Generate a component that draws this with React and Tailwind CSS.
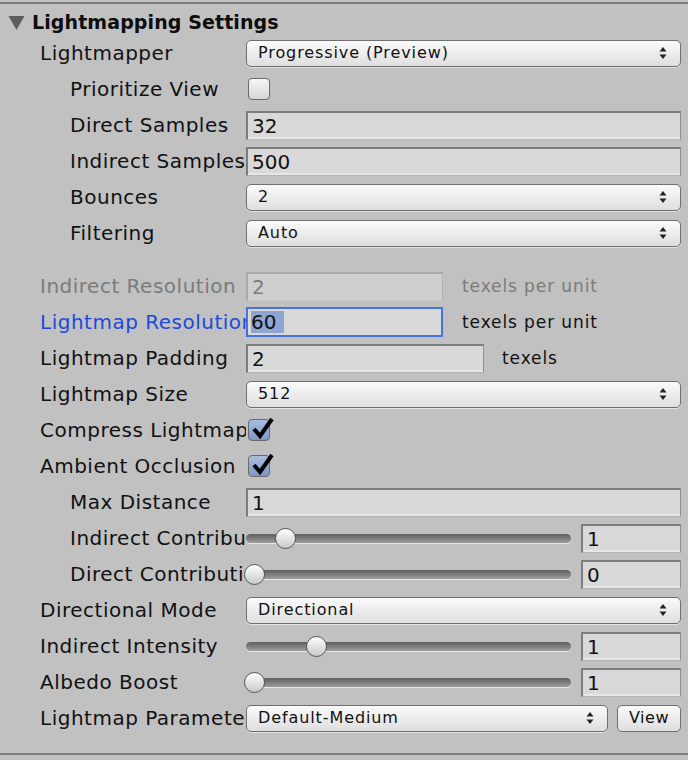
import React from "react";

const FONT = { fontFamily: '"DejaVu Sans", "Noto Sans", sans-serif' };

function Arrows() {
  return (
    <svg width="8" height="14" viewBox="0 0 8 14" className="shrink-0">
      <path d="M4 1 L7.5 5.5 L0.5 5.5 Z" fill="#222" />
      <path d="M4 13 L7.5 8.5 L0.5 8.5 Z" fill="#222" />
    </svg>
  );
}

function Dropdown({ value, className = "" }) {
  return (
    <div
      className={
        "flex h-[27px] items-center justify-between rounded-[5px] border border-[#6f6f6f] bg-gradient-to-b from-[#fbfbfb] to-[#dedede] pl-[11px] pr-[13px] text-[16px] tracking-[0.9px] text-[#111] shadow-[0_1px_0_#e4e4e4] " +
        className
      }
    >
      <span className="truncate">{value}</span>
      <Arrows />
    </div>
  );
}

function Field({ value, className = "", disabled = false, focused = false }) {
  if (focused) {
    return (
      <div
        className={
          "flex h-[30px] items-center border-2 border-[#4572dd] bg-[#d9d9d9] pl-[3px] text-[20px] text-[#111] " + className
        }
      >
        <span className="bg-[#8ea4d2] pr-[8px] leading-[22px]">{value}</span>
      </div>
    );
  }
  return (
    <div
      className={
        "flex h-[29px] items-center border-2 border-b border-r pl-[4px] text-[20px] " +
        (disabled
          ? "border-[#a9a9a9] border-b-[#c9c9c9] border-r-[#b3b3b3] bg-[#cfcfcf] text-[#7b7b7b] "
          : "border-[#7c7c7c] border-b-[#b4b4b4] border-r-[#8f8f8f] bg-[#d9d9d9] text-[#111] shadow-[inset_0_-2px_0_#e6e6e6] ") +
        className
      }
    >
      {value}
    </div>
  );
}

function Checkbox({ checked }) {
  return (
    <div
      className={
        "relative ml-[2px] h-[22px] w-[22px] rounded-[4px] border border-[#6a6a6a] " +
        (checked
          ? "bg-gradient-to-b from-[#a9bde0] to-[#7f98c6]"
          : "bg-gradient-to-b from-[#f6f6f6] to-[#d6d6d6]")
      }
    >
      {checked && (
        <svg width="26" height="24" viewBox="0 0 26 24" className="absolute left-[1px] top-[-4px]">
          <path d="M4 13 L10 20 L22 3" stroke="#000" strokeWidth="4" fill="none" strokeLinejoin="miter" strokeLinecap="butt" />
        </svg>
      )}
    </div>
  );
}

function Slider({ pos, value }) {
  return (
    <div className="flex flex-1 items-center">
      <div className="relative h-[28px] flex-1">
        <div className="absolute left-0 right-[10px] top-[10px] h-[9px] rounded-full bg-gradient-to-b from-[#5f5f5f] to-[#9d9d9d] shadow-[0_1px_0_#e8e8e8]" />
        <div
          className="absolute top-[4px] h-[21px] w-[21px] rounded-full border-[1.5px] border-[#555] bg-gradient-to-b from-[#ffffff] to-[#c9c9c9]"
          style={{ left: pos }}
        />
      </div>
      <Field value={value} className="w-[100px]" />
    </div>
  );
}

function Row({ label, indent = false, labelClass = "text-[#111]", children }) {
  return (
    <div className="flex h-[36px] items-center pr-[7px]">
      <div
        className={
          "shrink-0 overflow-hidden whitespace-nowrap text-[20px] tracking-[0.5px] " +
          (indent ? "w-[246px] pl-[70px] " : "w-[246px] pl-[40px] ") +
          labelClass
        }
      >
        {label}
      </div>
      <div className="flex min-w-0 flex-1 items-center">{children}</div>
    </div>
  );
}

export default function App() {
  return (
    <div className="h-[760px] w-[688px] bg-[#c1c1c1] pt-[2px]" style={FONT}>
      <div className="border-t-2 border-[#7c7c7c]">
        <div className="flex h-[31px] items-center pl-[8px] pt-[6px]">
          <svg width="17" height="15" viewBox="0 0 17 15" className="mr-[7px]">
            <path d="M0.5 1 L16.5 1 L8.5 15 Z" fill="#5e5e5e" />
          </svg>
          <span className="text-[19px] font-bold tracking-[0.1px] text-[#0d0d0d]">Lightmapping Settings</span>
        </div>

        <Row label="Lightmapper">
          <Dropdown value="Progressive (Preview)" className="flex-1" />
        </Row>
        <Row label="Prioritize View" indent>
          <Checkbox checked={false} />
        </Row>
        <Row label="Direct Samples" indent>
          <Field value="32" className="flex-1" />
        </Row>
        <Row label="Indirect Samples" indent>
          <Field value="500" className="flex-1" />
        </Row>
        <Row label="Bounces" indent>
          <Dropdown value="2" className="flex-1" />
        </Row>
        <Row label="Filtering" indent>
          <Dropdown value="Auto" className="flex-1" />
        </Row>

        <div className="h-[17px]" />

        <Row label="Indirect Resolution" labelClass="text-[#7b7b7b]">
          <Field value="2" disabled className="w-[197px]" />
          <span className="ml-[19px] mt-[2px] text-[17px] tracking-[0.9px] text-[#7b7b7b]">texels per unit</span>
        </Row>
        <Row label="Lightmap Resolution" labelClass="text-[#1c49dc]">
          <Field value="60" focused className="w-[197px]" />
          <span className="ml-[19px] mt-[2px] text-[17px] tracking-[0.9px] text-[#111]">texels per unit</span>
        </Row>
        <Row label="Lightmap Padding">
          <Field value="2" className="w-[238px]" />
          <span className="ml-[18px] mt-[2px] text-[17px] tracking-[0.9px] text-[#111]">texels</span>
        </Row>
        <Row label="Lightmap Size">
          <Dropdown value="512" className="flex-1" />
        </Row>
        <Row label="Compress Lightmaps">
          <Checkbox checked />
        </Row>
        <Row label="Ambient Occlusion">
          <Checkbox checked />
        </Row>
        <Row label="Max Distance" indent>
          <Field value="1" className="flex-1" />
        </Row>
        <Row label="Indirect Contribution" indent>
          <Slider pos="29px" value="1" />
        </Row>
        <Row label="Direct Contribution" indent>
          <Slider pos="-2px" value="0" />
        </Row>
        <Row label="Directional Mode">
          <Dropdown value="Directional" className="flex-1" />
        </Row>
        <Row label="Indirect Intensity">
          <Slider pos="60px" value="1" />
        </Row>
        <Row label="Albedo Boost">
          <Slider pos="-2px" value="1" />
        </Row>
        <Row label="Lightmap Parameters">
          <Dropdown value="Default-Medium" className="w-[362px]" />
          <div className="ml-[9px] flex h-[27px] flex-1 items-center justify-center rounded-[5px] border border-[#6f6f6f] bg-gradient-to-b from-[#fbfbfb] to-[#dedede] text-[16px] tracking-[0.5px] text-[#111]">
            View
          </div>
        </Row>

        <div className="h-[17px]" />
        <div className="h-[2px] bg-[#7c7c7c]" />
      </div>
    </div>
  );
}
